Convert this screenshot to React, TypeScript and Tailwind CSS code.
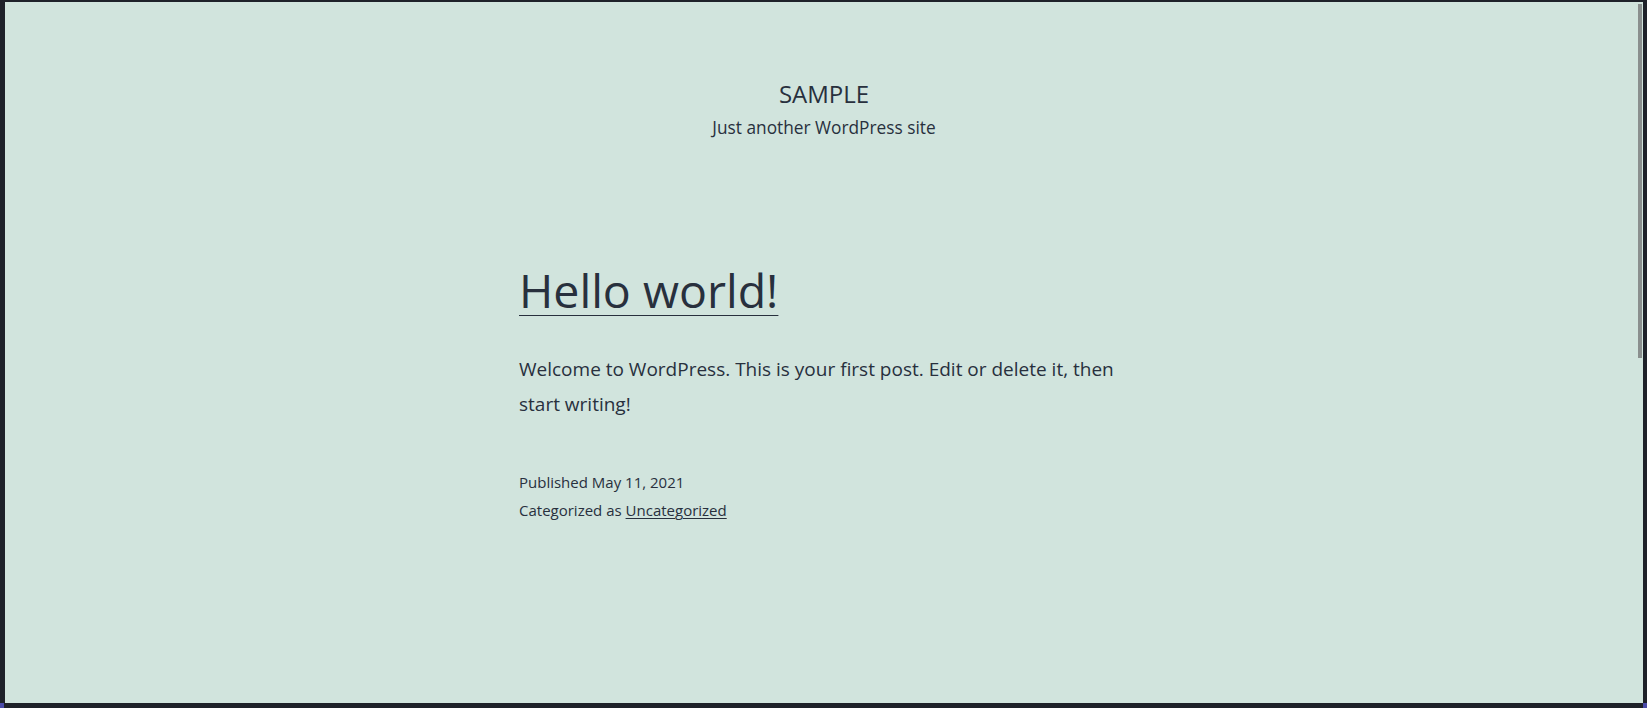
import React from "react";

export default function App() {
  const font = { fontFamily: '"Open Sans", "Noto Sans", sans-serif' };
  return (
    <div className="relative flex h-[708px] w-[1647px] overflow-hidden bg-[#1e2129] pl-[5px] pr-[4px] pt-[2px] pb-[5px]">
      <div
        className="relative flex flex-1 flex-col items-center bg-[#d1e4dd] text-[#28303d] font-['Open_Sans',sans-serif]"
        style={font}
      >
        <header className="flex flex-col items-center pt-[77px]">
          <p className="text-[24px] leading-[30px] uppercase">Sample</p>
          <p className="mt-[7px] text-[17.3px] leading-[24px]">Just another WordPress site</p>
        </header>
        <article className="mt-[122px] flex w-[610px] flex-col">
          <h2 className="text-[46.5px] leading-[56px] font-normal">
            <a className="underline decoration-1 underline-offset-[7px]" href="#">
              Hello world!
            </a>
          </h2>
          <p className="mt-[34px] text-[19px] leading-[35px]">
            Welcome to WordPress. This is your first post. Edit or delete it, then start writing!
          </p>
          <div className="mt-[46px] flex flex-col text-[15px] leading-[28px]">
            <span>Published May 11, 2021</span>
            <span>
              Categorized as{" "}
              <a className="underline decoration-1 underline-offset-[2px]" href="#">
                Uncategorized
              </a>
            </span>
          </div>
        </article>
        <div className="absolute right-[1px] top-[2px] h-[354px] w-[4px] bg-[#8a8f8e]" />
      </div>
      <div className="absolute bottom-0 left-0 h-[5px] w-[4px] bg-[#4a4aa8]" />
      <div className="absolute bottom-0 right-0 h-[5px] w-[4px] bg-[#4a4aa8]" />
    </div>
  );
}
